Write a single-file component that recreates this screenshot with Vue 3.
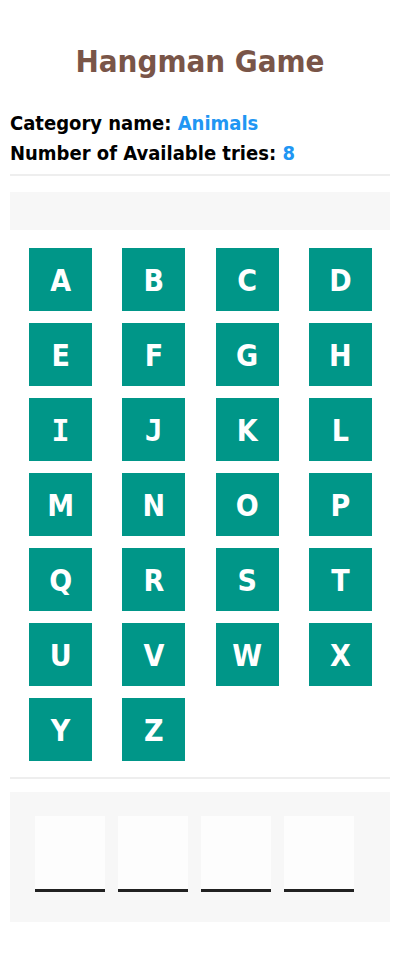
<script setup>
const letters = 'ABCDEFGHIJKLMNOPQRSTUVWXYZ'.split('')
const slots = 4
</script>

<template>
  <main class="game">
    <h1>Hangman Game</h1>
    <div class="info">
      <p>Category name: <span>Animals</span></p>
      <p>Number of Available tries: <span>8</span></p>
    </div>
    <div class="hint"></div>
    <div class="keys">
      <button
        v-for="letter in letters"
        :key="letter"
        type="button"
        :class="{ slab: 'IJ'.includes(letter) }"
      >{{ letter }}</button>
    </div>
    <div class="word">
      <span v-for="n in slots" :key="n" class="slot"></span>
    </div>
  </main>
</template>

<style>
body {
  margin: 0;
  background: #fff;
}
</style>

<style scoped>
.game {
  padding: 42px 10px 35px;
  font-family: Tahoma, Verdana, "DejaVu Sans Condensed", "Noto Sans", sans-serif;
  font-weight: bold;
}
h1 {
  margin: 0 0 28px;
  color: #795548;
  font-size: 31px;
  line-height: 38px;
  text-align: center;
}
.info {
  padding-bottom: 6px;
  border-bottom: 2px solid #eee;
  font-size: 20px;
  line-height: 30px;
}
.info p {
  margin: 0;
}
.info span {
  color: #2196f3;
}
.hint {
  height: 38px;
  margin-top: 16px;
  background: #f7f7f7;
}
.keys {
  display: grid;
  grid-template-columns: repeat(4, 1fr);
  row-gap: 12px;
  padding: 18px 3px 16px 4px;
  border-bottom: 2px solid #eee;
}
button {
  justify-self: center;
  width: 63px;
  height: 63px;
  padding: 2px 0 0;
  border: 0;
  background: #009688;
  color: #fff;
  font-family: inherit;
  font-size: 30px;
  font-weight: bold;
  cursor: pointer;
}
/* Capital I and J carry serifs on the keys */
.slab {
  font-family: "DejaVu Sans Mono", monospace;
}
.word {
  display: flex;
  flex-wrap: wrap;
  gap: 13px;
  margin-top: 13px;
  padding: 24px 25px 30px;
  background: #f7f7f7;
}
.slot {
  width: 70px;
  height: 73px;
  border-bottom: 3px solid #212121;
  background: #fdfdfd;
}
</style>
